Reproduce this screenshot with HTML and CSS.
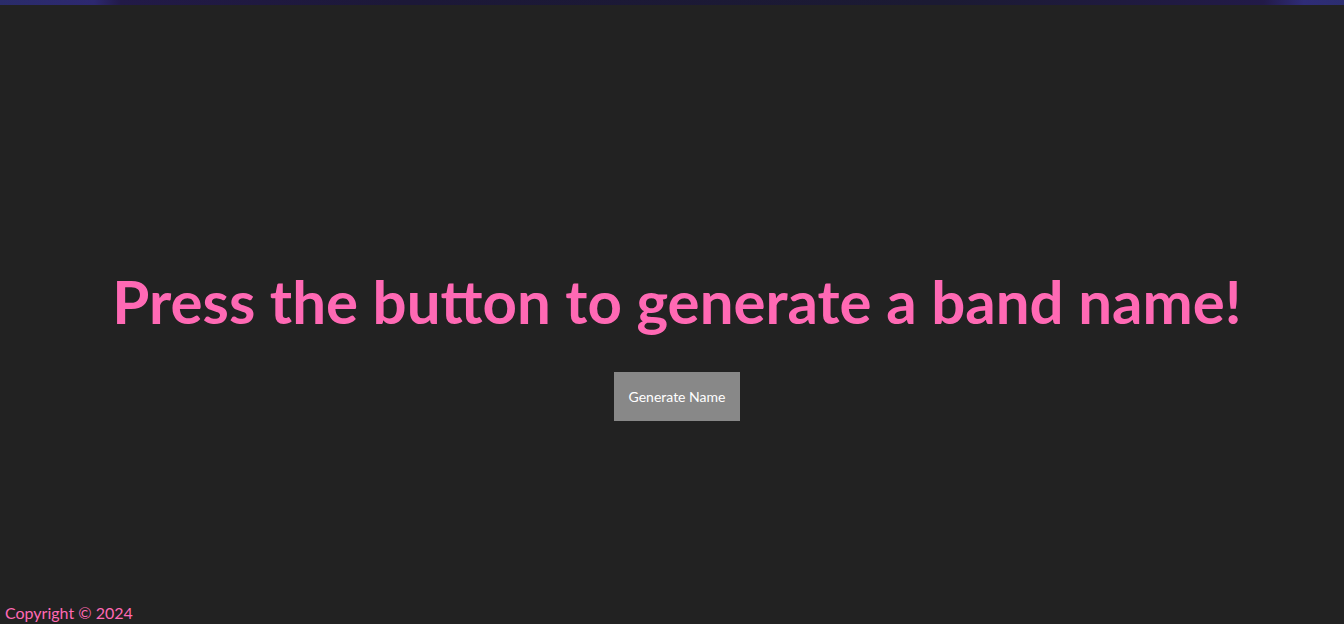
FILE: index.html
```html
<!DOCTYPE html>
<html lang="en">
<head>
<meta charset="utf-8">
<title>Band Name Generator</title>
<link rel="stylesheet" href="styles.css">
</head>
<body>
<div class="topbar"></div>
<main class="main">
  <h1 class="title">Press the button to generate a band name!</h1>
  <button class="gen-btn" type="button">Generate Name</button>
</main>
<footer class="footer">Copyright © 2024</footer>
</body>
</html>
```
FILE: styles.css
```css
html, body {
  margin: 0;
  padding: 0;
  height: 100%;
}
body {
  background: #222222;
  font-family: "Lato", "Open Sans", sans-serif;
  display: flex;
  flex-direction: column;
  color: #ff69b4;
}
.topbar {
  height: 5px;
  flex: none;
  background: linear-gradient(90deg, #2a2c6a 0%, #2d2870 7%, #221a48 9%, #1c1838 30%, #1b1a33 70%, #221a48 94%, #2f2c78 97%, #2c2e70 100%);
}
.main {
  flex: 1;
  display: flex;
  flex-direction: column;
  align-items: center;
  justify-content: center;
  padding: 77px 0 0 10px;
}
.title {
  margin: 0 0 35px;
  font-size: 60px;
  font-weight: 700;
  color: #ff69b4;
  text-align: center;
  line-height: 1.2;
}
.gen-btn {
  background: #888888;
  color: #ffffff;
  border: none;
  width: 126px;
  height: 49px;
  font-family: inherit;
  font-size: 14px;
  cursor: pointer;
}
.footer {
  padding: 0 0 2px 5px;
  font-size: 16px;
  line-height: 19px;
  color: #ff69b4;
}
```
